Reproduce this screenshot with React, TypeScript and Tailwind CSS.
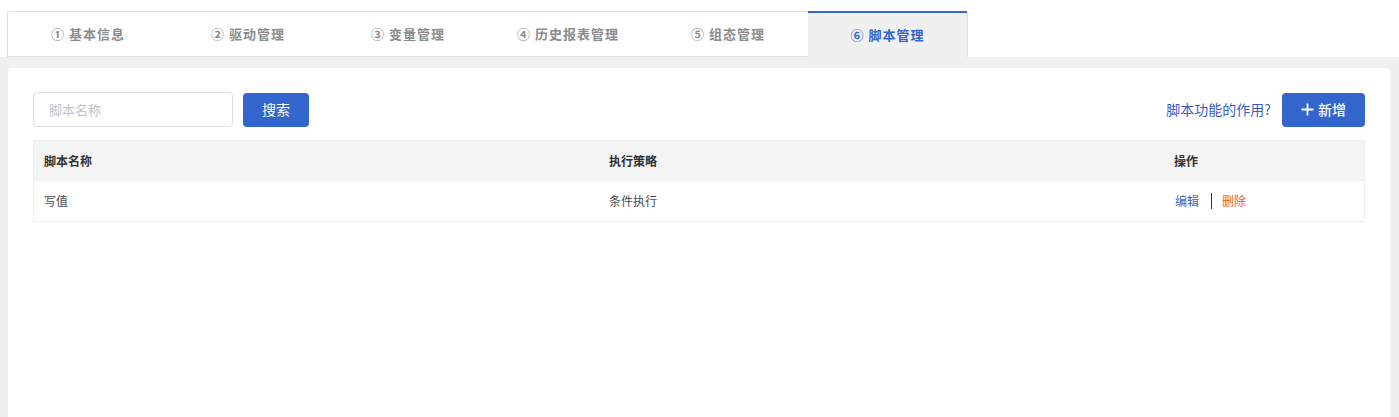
import React from "react";

const tabs = ["① 基本信息", "② 驱动管理", "③ 变量管理", "④ 历史报表管理", "⑤ 组态管理", "⑥ 脚本管理"];

export default function App() {
  const font = { fontFamily: '"Noto Sans CJK SC", "Noto Sans", sans-serif' };
  return (
    <div className="w-[1399px] h-[417px] bg-white overflow-hidden flex flex-col" style={font}>
      <div className="flex pt-[11px] pl-[7px] bg-white">
        <div className="flex border-t border-l border-[#dcdfe6] rounded-tl-[3px]">
          {tabs.map((t, i) =>
            i === 5 ? (
              <div
                key={t}
                className="w-[160px] h-[46px] mt-[-1px] flex items-center justify-center bg-[#f0f0f0] border-t-2 border-r border-t-[#3366cc] border-r-[#dcdfe6] rounded-tr-[3px] text-[13px] font-bold tracking-[1px] text-[#3366cc]"
              >
                {t}
              </div>
            ) : (
              <div
                key={t}
                className="w-[160px] h-[45px] flex items-center justify-center bg-white border-b border-[#dcdfe6] text-[13px] font-bold tracking-[1px] text-[#8c8c8c]"
              >
                {t}
              </div>
            )
          )}
        </div>
      </div>
      <div className="flex-1 bg-[#f0f0f0] pt-[11px] pl-[8px] pr-[9px]">
        <div className="h-full bg-white rounded-t-[4px] px-[25px] pt-[24px]">
          <div className="flex items-center justify-between">
            <div className="flex items-center gap-[10px]">
              <input
                placeholder="脚本名称"
                className="w-[200px] h-[35px] border border-[#dcdfe6] rounded-[4px] pl-[15px] text-[13px] text-[#606266] placeholder:text-[#c0c4cc] outline-none"
                style={font}
              />
              <button className="w-[66px] h-[34px] bg-[#3366cc] rounded-[4px] text-white text-[14px]">
                搜索
              </button>
            </div>
            <div className="flex items-center gap-[11px]">
              <span className="text-[14px] text-[#3b5bc4]">脚本功能的作用?</span>
              <button className="w-[83px] h-[34px] bg-[#3366cc] rounded-[4px] text-white text-[14px] font-medium flex items-center justify-center gap-[4px]">
                <svg width="13" height="13" viewBox="0 0 13 13" fill="none">
                  <path d="M6.5 0.5V12.5M0.5 6.5H12.5" stroke="white" strokeWidth="1.8" />
                </svg>
                新增
              </button>
            </div>
          </div>
          <div className="mt-[13px] border border-[#ebeef5]">
            <div className="grid grid-cols-[565px_565px_1fr] h-[40px] bg-[#f4f4f5] border-b border-[#ebeef5] items-center text-[12px] font-bold text-[#303133]">
              <div className="pl-[10px]">脚本名称</div>
              <div className="pl-[10px]">执行策略</div>
              <div className="pl-[10px]">操作</div>
            </div>
            <div className="grid grid-cols-[565px_565px_1fr] h-[40px] items-center text-[12px] text-[#4a4c52]">
              <div className="pl-[10px]">写值</div>
              <div className="pl-[10px]">条件执行</div>
              <div className="pl-[11px] flex items-center">
                <span className="text-[#3366cc]">编辑</span>
                <span className="w-px h-[16px] bg-[#333] ml-[12px] mr-[10px]" />
                <span className="text-[#e8602c]">删除</span>
              </div>
            </div>
          </div>
        </div>
      </div>
    </div>
  );
}
